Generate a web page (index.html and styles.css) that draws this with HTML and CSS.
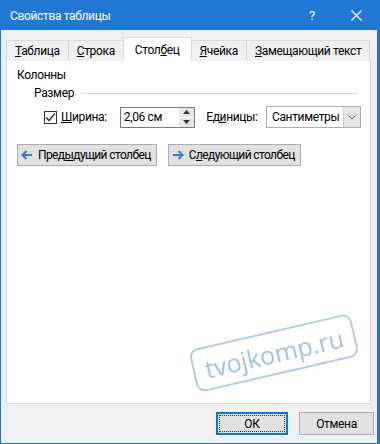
FILE: index.html
```html
<!DOCTYPE html>
<html lang="ru">
<head>
    <meta charset="UTF-8">
    <title>Свойства таблицы</title>
    <link rel="stylesheet" href="styles.css">
</head>
<body>

    <div class="window">
        <!-- Title bar -->
        <div class="titlebar">
            <span class="title">Свойства таблицы</span>
            <span class="help">?</span>
            <span class="close">
                <svg width="11" height="11" viewBox="0 0 11 11"><path d="M0.5 0.5 L10.5 10.5 M10.5 0.5 L0.5 10.5" stroke="#fff" stroke-width="1.2"/></svg>
            </span>
        </div>

        <div class="content">
            <!-- Tabs -->
            <div class="tabs">
                <div class="tab"><u>Т</u>аблица</div>
                <div class="tab"><u>С</u>трока</div>
                <div class="tab active">Стол<u>б</u>ец</div>
                <div class="tab"><u>Я</u>чейка</div>
                <div class="tab"><u>З</u>амещающий текст</div>
            </div>

            <div class="panel">
                <div class="group-title">Колонны</div>
                <div class="section">
                    <span>Размер</span>
                    <span class="rule"></span>
                </div>

                <div class="size-row">
                    <span class="checkbox">
                        <svg width="11" height="11" viewBox="0 0 11 11"><path d="M1 5.5 L4 8.5 L10 1.5" fill="none" stroke="#222" stroke-width="1.2"/></svg>
                    </span>
                    <span class="label-width"><u>Ш</u>ирина:</span>
                    <div class="spin-input">
                        <span class="value">2,06 см</span>
                        <div class="spin">
                            <span class="spin-btn"><svg width="7" height="4" viewBox="0 0 7 4"><path d="M0 4 L3.5 0 L7 4 Z" fill="#333"/></svg></span>
                            <span class="spin-btn"><svg width="7" height="4" viewBox="0 0 7 4"><path d="M0 0 L3.5 4 L7 0 Z" fill="#333"/></svg></span>
                        </div>
                    </div>
                    <span class="label-units">Ед<u>и</u>ницы:</span>
                    <div class="select">
                        <span class="value">Сантиметры</span>
                        <span class="drop">
                            <svg width="8" height="5" viewBox="0 0 8 5"><path d="M0.5 0.5 L4 4 L7.5 0.5" fill="none" stroke="#555" stroke-width="1"/></svg>
                        </span>
                    </div>
                </div>

                <div class="nav-row">
                    <button class="btn nav">
                        <svg width="12" height="10" viewBox="0 0 12 10"><path d="M11 5 H2 M5.5 1 L1.5 5 L5.5 9" fill="none" stroke="#3a7cc9" stroke-width="2"/></svg>
                        <span>Пред<u>ы</u>дущий столбец</span>
                    </button>
                    <button class="btn nav">
                        <svg width="12" height="10" viewBox="0 0 12 10"><path d="M1 5 H10 M6.5 1 L10.5 5 L6.5 9" fill="none" stroke="#3a7cc9" stroke-width="2"/></svg>
                        <span>С<u>л</u>едующий столбец</span>
                    </button>
                </div>
            </div>

            <!-- Dialog buttons -->
            <div class="footer">
                <button class="btn ok"><span class="focus">ОК</span></button>
                <button class="btn cancel">Отмена</button>
            </div>
        </div>

        <!-- Site stamp over the dialog -->
        <div class="stamp">tvojkomp.ru</div>
    </div>

</body>
</html>
```

FILE: styles.css
```css
body {
    margin: 0;
    font-family: Roboto, "Noto Sans", sans-serif;
    font-size: 12px;
    letter-spacing: -0.35px;
    color: #000;
}

.window {
    position: relative;
    width: 380px;
    height: 444px;
    box-sizing: border-box;
    border: 1px solid #1f79d2;
    border-right-width: 3px;
    display: flex;
    flex-direction: column;
    overflow: hidden;
}

.titlebar {
    height: 29px;
    background-color: #1f79d2;
    color: #fff;
    display: flex;
    align-items: center;
    padding-left: 9px;
}

.title {
    flex: 1;
    font-size: 12px;
}

.help {
    width: 46px;
    text-align: center;
    font-size: 13px;
}

.close {
    width: 42px;
    display: flex;
    justify-content: center;
}

.content {
    flex: 1;
    background-color: #f0f0f0;
    padding: 7px 6px 0 5px;
    display: flex;
    flex-direction: column;
}

/* Tabs */
.tabs {
    display: flex;
    align-items: flex-end;
    position: relative;
    z-index: 1;
    margin-bottom: -1px;
}

.tab {
    height: 20px;
    line-height: 20px;
    padding: 0 8px;
    border: 1px solid #d9d9d9;
    border-bottom: none;
    margin-right: -1px;
    background-color: #f0f0f0;
    white-space: nowrap;
}

.tab.active {
    height: 23px;
    line-height: 24px;
    padding: 0 11px;
    background-color: #fff;
    position: relative;
    z-index: 2;
}

.panel {
    flex: 1;
    background-color: #fff;
    border: 1px solid #d9d9d9;
    padding: 6px 9px 0 10px;
}

.group-title {
    line-height: 16px;
}

.section {
    display: flex;
    align-items: center;
    margin: 2px 0 0 17px;
    line-height: 16px;
}

.rule {
    flex: 1;
    height: 1px;
    background-color: #dcdcdc;
    margin-left: 7px;
    margin-right: 3px;
}

.size-row {
    display: flex;
    align-items: center;
    margin: 5px 0 0 27px;
}

.checkbox {
    width: 11px;
    height: 11px;
    border: 1px solid #333;
    background-color: #fff;
    display: flex;
}

.label-width {
    margin-left: 4px;
    width: 60px;
}

.spin-input {
    width: 77px;
    height: 21px;
    box-sizing: border-box;
    border: 1px solid #7a7a7a;
    display: flex;
    align-items: center;
}

.spin-input .value {
    flex: 1;
    padding-left: 3px;
}

.spin {
    width: 15px;
    height: 19px;
    display: flex;
    flex-direction: column;
    gap: 1px;
}

.spin-btn {
    flex: 1;
    background-color: #e6e6e6;
    display: flex;
    align-items: center;
    justify-content: center;
}

.label-units {
    margin-left: 11px;
    width: 61px;
}

.select {
    width: 97px;
    height: 22px;
    box-sizing: border-box;
    border: 1px solid #adadad;
    display: flex;
    align-items: center;
}

.select .value {
    flex: 1;
    padding-left: 5px;
    white-space: nowrap;
}

.drop {
    width: 16px;
    height: 20px;
    background-color: #e5e5e5;
    border-left: 1px solid #cfcfcf;
    display: flex;
    align-items: center;
    justify-content: center;
}

.nav-row {
    display: flex;
    gap: 11px;
    margin-top: 16px;
}

.btn {
    font-family: inherit;
    font-size: 12px;
    letter-spacing: inherit;
    color: #000;
    background-color: #e1e1e1;
    border: 1px solid #adadad;
    height: 22px;
    padding: 0;
    display: flex;
    align-items: center;
    justify-content: center;
    white-space: nowrap;
}

.btn.nav {
    padding: 0 5px 0 3px;
    gap: 5px;
    letter-spacing: -0.6px;
}

.footer {
    height: 39px;
    display: flex;
    justify-content: flex-end;
    align-items: center;
    gap: 11px;
    margin-right: -3px;
}

.btn.ok {
    width: 72px;
    height: 23px;
    border: 1px solid #0078d7;
    box-shadow: inset 0 0 0 1px #0078d7;
}

.focus {
    display: flex;
    align-items: center;
    justify-content: center;
    width: 64px;
    height: 15px;
    border: 1px dotted #333;
}

.btn.cancel {
    width: 75px;
    height: 23px;
}

.stamp {
    position: absolute;
    left: 190px;
    top: 330px;
    width: 166px;
    height: 44px;
    box-sizing: border-box;
    border: 2px solid #b2cbe8;
    border-radius: 9px;
    transform: rotate(-13deg);
    color: #a5c1e3;
    font-family: "Open Sans", sans-serif;
    font-size: 25px;
    letter-spacing: 0;
    line-height: 40px;
    text-align: center;
}
```
